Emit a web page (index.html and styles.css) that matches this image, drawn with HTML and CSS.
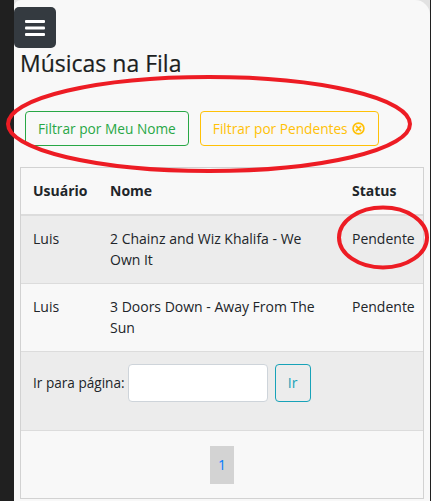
FILE: index.html
```html
<!DOCTYPE html>
<html lang="pt-BR">
<head>
<meta charset="utf-8">
<title>Músicas na Fila</title>
<link rel="stylesheet" href="styles.css">
</head>
<body>
<div class="frame">
  <div class="panel">
    <button class="menu-btn" type="button" aria-label="Menu">
      <svg width="20" height="16" viewBox="0 0 20 16"><rect x="0" y="0" width="20" height="3" rx="1"/><rect x="0" y="6.5" width="20" height="3" rx="1"/><rect x="0" y="13" width="20" height="3" rx="1"/></svg>
    </button>
    <div class="content">
      <h4 class="title">Músicas na Fila</h4>
      <div class="filters">
        <button class="btn btn-green" type="button">Filtrar por Meu Nome</button>
        <button class="btn btn-yellow" type="button">Filtrar por Pendentes <svg class="xcirc" width="13" height="13" viewBox="0 0 13 13"><circle cx="6.5" cy="6.5" r="5.4" fill="none" stroke="currentColor" stroke-width="1.7"/><path d="M4.4 4.4 L8.6 8.6 M8.6 4.4 L4.4 8.6" stroke="currentColor" stroke-width="1.7" stroke-linecap="round"/></svg></button>
      </div>
      <table class="queue">
        <colgroup><col class="c-user"><col class="c-name"><col class="c-status"></colgroup>
        <thead>
          <tr><th>Usuário</th><th>Nome</th><th>Status</th></tr>
        </thead>
        <tbody>
          <tr class="striped"><td>Luis</td><td>2 Chainz and Wiz Khalifa - We Own It</td><td>Pendente</td></tr>
          <tr><td>Luis</td><td>3 Doors Down - Away From The Sun</td><td>Pendente</td></tr>
          <tr class="striped goto-row">
            <td colspan="3">
              <form class="goto">
                <label class="goto-label">Ir para página:</label>
                <input class="goto-input" type="text">
                <button class="btn btn-teal" type="button">Ir</button>
              </form>
            </td>
          </tr>
          <tr>
            <td colspan="3" class="pager-cell">
              <ul class="pager"><li class="page-item">1</li></ul>
            </td>
          </tr>
        </tbody>
      </table>
    </div>
  </div>
  <svg class="annot" width="431" height="501" viewBox="0 0 431 501">
    <ellipse cx="209" cy="124" rx="201" ry="47" fill="none" stroke="#ed1c24" stroke-width="4"/>
    <ellipse cx="383" cy="237.5" rx="44" ry="30" fill="none" stroke="#ed1c24" stroke-width="4"/>
  </svg>
</div>
</body>
</html>
```
FILE: styles.css
```css
* { box-sizing: border-box; }
html, body { margin: 0; padding: 0; }
body {
  background: #202020;
  font-family: "Open Sans", "Noto Sans", sans-serif;
  color: #212529;
  overflow: hidden;
}
.frame {
  position: relative;
  margin-left: 14px;
  margin-right: 1px;
  background: #e2e2e2;
  height: 501px;
}
.panel {
  background: #f8f8f8;
  border-radius: 7px 15px 0 0;
  height: 501px;
  padding-top: 7px;
}
.menu-btn {
  display: flex;
  align-items: flex-start;
  width: 42px;
  height: 41px;
  margin: 0;
  padding: 13px 0 0 11px;
  background: #343a40;
  border: 0;
  border-radius: 5px;
  fill: #ffffff;
}
.content {
  padding: 0 6px;
}
.title {
  margin: 1px 0 0 0;
  font-size: 23px;
  line-height: 28px;
  font-weight: 400;
  color: #1b1e21;
  -webkit-text-stroke: 0.2px #1b1e21;
}
.filters {
  display: flex;
  gap: 11px;
  margin-top: 34px;
  padding-left: 5px;
}
.btn {
  font-family: inherit;
  font-size: 13.7px;
  line-height: 21px;
  padding: 6px 12px;
  background: transparent;
  border: 1px solid;
  border-radius: 4px;
  display: inline-flex;
  align-items: center;
}
.btn-green { color: #28a745; border-color: #28a745; }
.btn-yellow { color: #ffc107; border-color: #ffc107; padding-right: 13px; }
.xcirc { margin-left: 4px; }
.queue {
  margin-top: 21px;
  width: 404px;
  table-layout: fixed;
  border-collapse: separate;
  border-spacing: 0;
  border: 1px solid #d2d2d2;
  font-size: 14px;
  line-height: 21.6px;
}
.c-user { width: 77px; }
.c-name { width: 242px; }
.c-status { width: 83px; }
.queue th {
  text-align: left;
  font-weight: 700;
  padding: 12px;
  border-bottom: 2px solid #dcdcdc;
}
.queue td {
  padding: 12px;
  vertical-align: top;
  border-top: 1px solid #dcdcdc;
}
.queue tbody tr:first-child td { border-top: 0; }
.queue .striped td { background: #ececec; }
.goto {
  display: flex;
  align-items: center;
  margin: 0 0 16px 0;
}
.goto-label { margin-right: 3px; font-size: 13.6px; }
.goto-input {
  width: 140px;
  height: 38px;
  border: 1px solid #ced4da;
  border-radius: 4px;
  background: #ffffff;
  margin: 0 7px 0 0;
}
.btn-teal {
  color: #17a2b8;
  border-color: #17a2b8;
  height: 38px;
  width: 36px;
  justify-content: center;
  font-size: 14px;
}
.queue .pager-cell { padding: 15px 12px 14px 12px; }
.pager {
  list-style: none;
  margin: 0;
  padding: 0;
  display: flex;
  justify-content: center;
}
.page-item {
  background: #d3d3d3;
  color: #007bff;
  padding: 8px 8px;
  line-height: 21.6px;
  min-width: 24px;
  text-align: center;
}
.annot {
  position: absolute;
  top: 0;
  left: -14px;
  pointer-events: none;
}
```
